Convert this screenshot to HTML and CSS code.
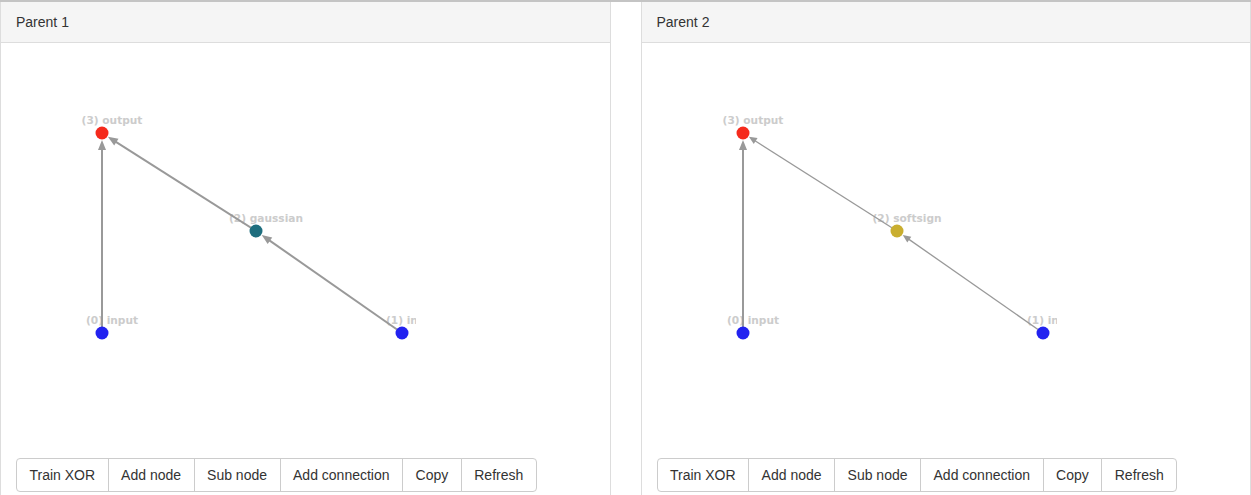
FILE: index.html
```html
<!DOCTYPE html>
<html>
<head>
<meta charset="utf-8">
<link rel="stylesheet" href="styles.css">
</head>
<body>
<div class="topline"></div>
<div class="row">
  <div class="panel">
    <div class="panel-heading">Parent 1</div>
    <div class="panel-body">
      <svg class="graph" width="400" height="400" viewBox="0 0 400 400">
        <g class="labels">
          <text x="96" y="66">(3) output</text>
          <text x="250" y="164">(2) gaussian</text>
          <text x="96" y="266">(0) input</text>
          <text x="396" y="266">(1) input</text>
        </g>
        <g class="edges">
          <line class="thick" x1="86" y1="275" x2="86" y2="91"/>
          <polygon points="86,82 82,92 90,92"/>
          <line class="thick" x1="240" y1="173" x2="99.5" y2="83.6"/>
          <polygon points="91.9,78.76 98.20,87.51 102.50,80.75"/>
          <line class="thick" x1="386" y1="275" x2="253" y2="182.1"/>
          <polygon points="245.74,177.01 251.65,186.02 256.23,179.46"/>
        </g>
        <circle class="n-out" cx="86" cy="75" r="6.5"/>
        <circle class="n-gauss" cx="240" cy="173" r="6.5"/>
        <circle class="n-in" cx="86" cy="275" r="6.5"/>
        <circle class="n-in" cx="386" cy="275" r="6.5"/>
      </svg>
      <div class="btn-group">
        <button class="btn">Train XOR</button><button class="btn">Add node</button><button class="btn">Sub node</button><button class="btn">Add connection</button><button class="btn">Copy</button><button class="btn">Refresh</button>
      </div>
    </div>
  </div>
  <div class="panel">
    <div class="panel-heading">Parent 2</div>
    <div class="panel-body">
      <svg class="graph" width="400" height="400" viewBox="0 0 400 400">
        <g class="labels">
          <text x="96" y="66">(3) output</text>
          <text x="250" y="164">(2) softsign</text>
          <text x="96" y="266">(0) input</text>
          <text x="396" y="266">(1) input</text>
        </g>
        <g class="edges">
          <line class="thick" x1="86" y1="275" x2="86" y2="91"/>
          <polygon points="86,82 82,92 90,92"/>
          <line class="thin" x1="240" y1="173" x2="98" y2="82.7"/>
          <polygon points="91.9,78.76 96.78,86.01 100.54,80.11"/>
          <line class="thin" x1="386" y1="275" x2="251.6" y2="181.1"/>
          <polygon points="245.74,177.01 250.30,184.46 254.30,178.72"/>
        </g>
        <circle class="n-out" cx="86" cy="75" r="6.5"/>
        <circle class="n-soft" cx="240" cy="173" r="6.5"/>
        <circle class="n-in" cx="86" cy="275" r="6.5"/>
        <circle class="n-in" cx="386" cy="275" r="6.5"/>
      </svg>
      <div class="btn-group">
        <button class="btn">Train XOR</button><button class="btn">Add node</button><button class="btn">Sub node</button><button class="btn">Add connection</button><button class="btn">Copy</button><button class="btn">Refresh</button>
      </div>
    </div>
  </div>
</div>
</body>
</html>
```
FILE: styles.css
```css
html, body {
  margin: 0;
  padding: 0;
  background: #fff;
  font-family: "Liberation Sans", Arial, sans-serif;
  font-size: 14px;
  color: #333;
}
.topline {
  height: 2px;
  background: #c4c4c4;
}
.row {
  display: flex;
  gap: 30px;
}
.panel {
  flex: 1;
  border: 1px solid #ddd;
  border-top: none;
  border-radius: 0 0 4px 4px;
  background: #fff;
}
.panel-heading {
  background: #f5f5f5;
  border-bottom: 1px solid #ddd;
  padding: 11px 15px 11px 15px;
  height: 18px;
  line-height: 18px;
  color: #333;
}
.panel-body {
  padding: 15px;
}
.graph {
  display: block;
  overflow: hidden;
}
.labels text {
  font-family: "DejaVu Sans", Verdana, sans-serif;
  font-weight: bold;
  font-size: 10.6px;
  fill: #ccc;
  text-anchor: middle;
}
.edges line {
  stroke: #999;
}
.edges line.thick { stroke-width: 2; }
.edges line.thin { stroke-width: 1.3; }
.edges polygon { fill: #999; }
.n-out { fill: #f52a1c; }
.n-gauss { fill: #1e6e7e; }
.n-soft { fill: #c9ae2f; }
.n-in { fill: #2222f0; }
.btn-group {
  display: inline-flex;
}
.btn {
  font-family: "Liberation Sans", Arial, sans-serif;
  font-size: 14px;
  color: #333;
  background: #fff;
  border: 1px solid #ccc;
  margin: 0 0 0 -1px;
  padding: 6px 12.5px;
  line-height: 20px;
  border-radius: 0;
}
.btn:first-child {
  margin-left: 0;
  border-radius: 4px 0 0 4px;
}
.btn:last-child {
  border-radius: 0 4px 4px 0;
}
```
